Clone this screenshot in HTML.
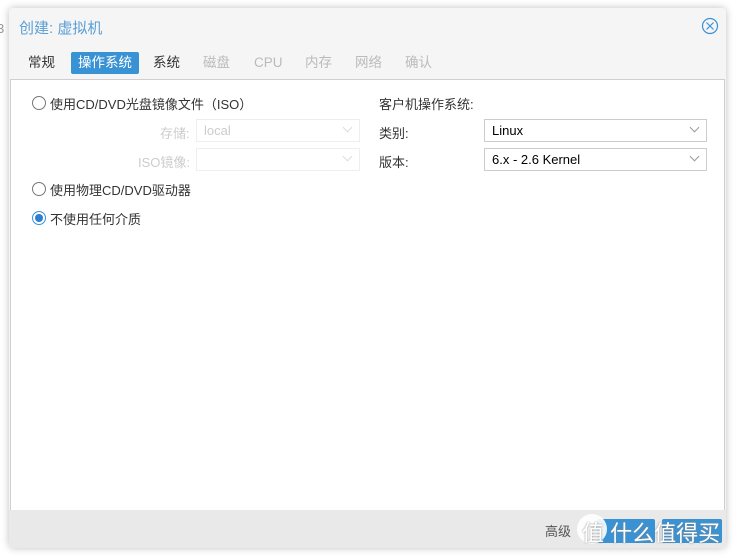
<!DOCTYPE html>
<html><head><meta charset="utf-8"><style>
body{margin:0;width:738px;height:558px;background:#fff;font-family:"Liberation Sans","Noto Sans CJK SC",sans-serif;font-size:13px;color:#333;position:relative;overflow:hidden}
.dlg{position:absolute;left:9px;top:8px;width:717px;height:540px;background:#f5f5f5;border-radius:4px;box-shadow:0 0 8px rgba(0,0,0,.25)}
.title{position:absolute;left:10px;top:9px;font-size:15px;color:#5a9fd6}
.close{position:absolute;right:7px;top:9px}
.tab{position:absolute;top:44px;height:22px;line-height:22px;font-size:13.5px;padding:0 7px}
.dis{color:#bbb}
.act{background:#3892d4;color:#fff;border-radius:2px}
.panel{position:absolute;left:1px;top:71px;width:713px;height:430px;background:#fff;border:1px solid #cfcfcf}
.footer{position:absolute;left:0;top:502px;width:717px;height:38px;background:#e9e9e9;border-radius:0 0 4px 4px}
.radio{position:absolute;width:12px;height:12px;border:1px solid #777;border-radius:50%}
.t{position:absolute;white-space:nowrap}
.sel{position:absolute;height:23px;border:1px solid #ccc;background:#fff;box-sizing:border-box}
.sel span{position:absolute;left:7px;top:3px}
.sel i{position:absolute;right:8px;top:4px;width:6px;height:6px;border-right:1px solid #999;border-bottom:1px solid #999;transform:rotate(45deg)}
.btn{position:absolute;top:9px;height:24px;background:#3892d4;border-radius:2px;color:#fff}
</style></head><body>
<div class="t" style="left:-3px;top:21px;color:#999;font-size:13px">3</div>
<div class="dlg">
<div class="title">创建: 虚拟机</div>
<svg class="close" width="18" height="18" viewBox="0 0 18 18"><circle cx="9" cy="9" r="7.5" fill="none" stroke="#3892d4" stroke-width="1.2"/><path d="M5.5 5.5L12.5 12.5M12.5 5.5L5.5 12.5" stroke="#3892d4" stroke-width="1.2"/></svg>
<div class="tab" style="left:12px">常规</div>
<div class="tab act" style="left:62px">操作系统</div>
<div class="tab" style="left:137px">系统</div>
<div class="tab dis" style="left:187px">磁盘</div>
<div class="tab dis" style="left:238px">CPU</div>
<div class="tab dis" style="left:289px">内存</div>
<div class="tab dis" style="left:339px">网络</div>
<div class="tab dis" style="left:389px">确认</div>
<div class="panel">
<div class="radio" style="left:21px;top:16px"></div>
<div class="t" style="left:39px;top:14px">使用CD/DVD光盘镜像文件（ISO）</div>
<div class="t" style="left:149px;top:43px;color:#ccc">存储:</div>
<div class="sel" style="left:185px;top:39px;width:164px;border-color:#eee"><span style="color:#ccc">local</span><i style="border-color:#ddd"></i></div>
<div class="t" style="left:127px;top:72px;color:#ccc">ISO镜像:</div>
<div class="sel" style="left:185px;top:68px;width:164px;border-color:#eee"><i style="border-color:#ddd"></i></div>
<div class="radio" style="left:21px;top:102px"></div>
<div class="t" style="left:39px;top:100px">使用物理CD/DVD驱动器</div>
<div class="radio" style="left:21px;top:131px;border-color:#3892d4"><div style="position:absolute;left:2px;top:2px;width:8px;height:8px;border-radius:50%;background:#2d7fd0"></div></div>
<div class="t" style="left:39px;top:129px">不使用任何介质</div>
<div class="t" style="left:368px;top:14px">客户机操作系统:</div>
<div class="t" style="left:368px;top:43px">类别:</div>
<div class="sel" style="left:473px;top:39px;width:223px"><span style="color:#000">Linux</span><i></i></div>
<div class="t" style="left:368px;top:72px">版本:</div>
<div class="sel" style="left:473px;top:68px;width:223px"><span style="color:#000">6.x - 2.6 Kernel</span><i></i></div>
</div>
<div class="footer">
<div class="t" style="left:536px;top:11px;color:#555">高级</div>
<div class="btn" style="left:588px;width:58px"></div>
<div class="btn" style="left:653px;width:60px"></div>
<div style="position:absolute;left:568px;top:4px;width:30px;height:30px;border-radius:50%;background:rgba(255,255,255,.9)"></div>
<div class="t" style="left:573px;top:6px;font-size:22px;color:#fff;text-shadow:0 0 2px #888">值 什么值得买</div>
</div>
</div>
</body></html>
